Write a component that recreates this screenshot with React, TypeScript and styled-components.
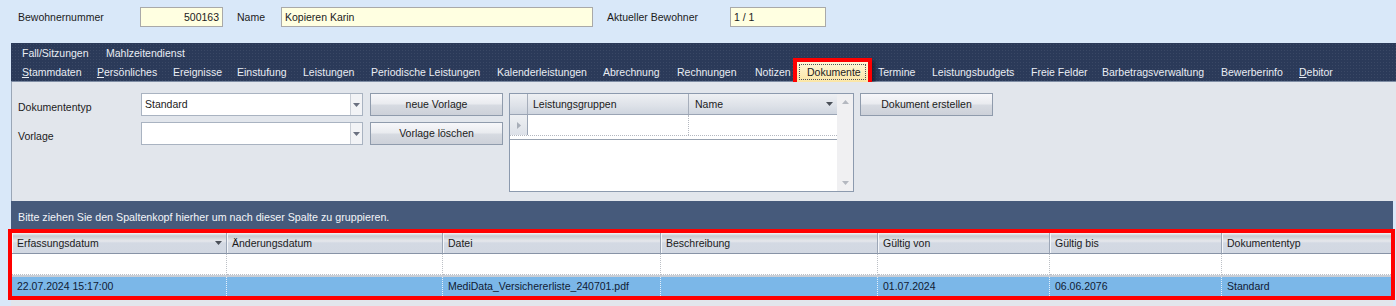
import styled, { createGlobalStyle } from "styled-components";

const GlobalStyle = createGlobalStyle`
  body {
    margin: 0;
    background: #d9e8f9;
    font-family: "Liberation Sans", Arial, sans-serif;
    font-size: 10.5px;
    color: #1b1b1b;
  }
`;

type Tab = { label: string; w: number; u?: boolean; active?: boolean };

const tabsTop: Tab[] = [
  { label: "Fall/Sitzungen", w: 84 },
  { label: "Mahlzeitendienst", w: 110 },
];

const tabsMain: Tab[] = [
  { label: "Stammdaten", w: 75, u: true },
  { label: "Persönliches", w: 76, u: true },
  { label: "Ereignisse", w: 64 },
  { label: "Einstufung", w: 66 },
  { label: "Leistungen", w: 68 },
  { label: "Periodische Leistungen", w: 126 },
  { label: "Kalenderleistungen", w: 106 },
  { label: "Abrechnung", w: 74 },
  { label: "Rechnungen", w: 78 },
  { label: "Notizen", w: 52 },
  { label: "Dokumente", w: 71, active: true },
  { label: "Termine", w: 54 },
  { label: "Leistungsbudgets", w: 99 },
  { label: "Freie Felder", w: 71 },
  { label: "Barbetragsverwaltung", w: 119 },
  { label: "Bewerberinfo", w: 78 },
  { label: "Debitor", w: 60, u: true },
];

const columns = [
  { title: "Erfassungsdatum", sort: true, value: "22.07.2024 15:17:00" },
  { title: "Änderungsdatum", value: "" },
  { title: "Datei", value: "MediData_Versichererliste_240701.pdf" },
  { title: "Beschreibung", value: "" },
  { title: "Gültig von", value: "01.07.2024" },
  { title: "Gültig bis", value: "06.06.2076" },
  { title: "Dokumententyp", value: "Standard" },
];

const Caret = ({ dir, color = "#4a4f58" }: { dir: "down" | "up" | "right"; color?: string }) => {
  const pts =
    dir === "down" ? "0,0 7,0 3.5,4" : dir === "up" ? "0,4 7,4 3.5,0" : "0,0 4,3.5 0,7";
  const w = dir === "right" ? 4 : 7;
  const h = dir === "right" ? 7 : 4;
  return (
    <svg width={w} height={h} viewBox={`0 0 ${w} ${h}`}>
      <polygon points={pts} fill={color} />
    </svg>
  );
};

const renderLabel = (t: Tab) =>
  t.u ? (
    <>
      <u>{t.label[0]}</u>
      {t.label.slice(1)}
    </>
  ) : (
    t.label
  );

export default function App() {
  return (
    <Page>
      <GlobalStyle />
      <TopBar>
        <FieldLabel $w={122}>Bewohnernummer</FieldLabel>
        <FieldInput $w={83} $right>
          500163
        </FieldInput>
        <FieldLabel $w={44} $ml={14}>
          Name
        </FieldLabel>
        <FieldInput $w={312}>Kopieren Karin</FieldInput>
        <FieldLabel $w={123} $ml={14}>
          Aktueller Bewohner
        </FieldLabel>
        <FieldInput $w={96}>1 / 1</FieldInput>
      </TopBar>

      <Main>
        <TabStrip>
          <TabRow $h={18}>
            {tabsTop.map((t) => (
              <TabItem key={t.label} $w={t.w}>
                {renderLabel(t)}
              </TabItem>
            ))}
          </TabRow>
          <TabRow $h={19}>
            {tabsMain.map((t) =>
              t.active ? (
                <ActiveTab key={t.label} $w={t.w}>
                  <FocusBox>{t.label}</FocusBox>
                </ActiveTab>
              ) : (
                <TabItem key={t.label} $w={t.w}>
                  {renderLabel(t)}
                </TabItem>
              )
            )}
          </TabRow>
        </TabStrip>

        <Panel>
          <FormGrid>
            <FormLabel>Dokumententyp</FormLabel>
            <Combo>
              <ComboText>Standard</ComboText>
              <ComboButton>
                <Caret dir="down" color="#6a7080" />
              </ComboButton>
            </Combo>
            <Button>neue Vorlage</Button>
            <FormLabel>Vorlage</FormLabel>
            <Combo>
              <ComboText />
              <ComboButton>
                <Caret dir="down" color="#6a7080" />
              </ComboButton>
            </Combo>
            <Button>Vorlage löschen</Button>
          </FormGrid>

          <MiniGrid>
            <MiniTable>
              <MiniHeader>
                <MiniHeadCell />
                <MiniHeadCell>Leistungsgruppen</MiniHeadCell>
                <MiniHeadCell>
                  Name
                  <HeadArrow>
                    <Caret dir="down" />
                  </HeadArrow>
                </MiniHeadCell>
              </MiniHeader>
              <MiniRow>
                <Indicator>
                  <Caret dir="right" color="#a8aeb8" />
                </Indicator>
                <MiniCell />
                <MiniCell />
              </MiniRow>
              <MiniRule />
            </MiniTable>
            <ScrollBar>
              <ScrollArrow>
                <Caret dir="up" color="#b4b8c0" />
              </ScrollArrow>
              <ScrollArrow>
                <Caret dir="down" color="#b4b8c0" />
              </ScrollArrow>
            </ScrollBar>
          </MiniGrid>

          <Button>Dokument erstellen</Button>
        </Panel>

        <GridArea>
          <GroupPanel>
            Bitte ziehen Sie den Spaltenkopf hierher um nach dieser Spalte zu gruppieren.
          </GroupPanel>
          <Marked>
            <GridRow>
              {columns.map((c) => (
                <HeadCell key={c.title}>
                  {c.title}
                  {c.sort && (
                    <HeadArrow>
                      <Caret dir="down" />
                    </HeadArrow>
                  )}
                </HeadCell>
              ))}
            </GridRow>
            <GridRow>
              {columns.map((c) => (
                <FilterCell key={c.title} />
              ))}
            </GridRow>
            <RowGap />
            <GridRow>
              {columns.map((c) => (
                <SelectedCell key={c.title}>{c.value}</SelectedCell>
              ))}
            </GridRow>
          </Marked>
        </GridArea>
      </Main>
    </Page>
  );
}

const Page = styled.div`
  width: 1396px;
  height: 306px;
  overflow: hidden;
  display: flex;
  flex-direction: column;
`;

const TopBar = styled.div`
  height: 43px;
  box-sizing: border-box;
  padding: 7px 0 0 18px;
  display: flex;
  align-items: flex-start;
`;

const FieldLabel = styled.div<{ $w: number; $ml?: number }>`
  width: ${(p) => p.$w}px;
  margin-left: ${(p) => p.$ml ?? 0}px;
  line-height: 20px;
`;

const FieldInput = styled.div<{ $w: number; $right?: boolean }>`
  width: ${(p) => p.$w}px;
  height: 20px;
  box-sizing: border-box;
  border: 1px solid #a9a9a9;
  background: #ffffe1;
  padding: 0 3px;
  line-height: 18px;
  text-align: ${(p) => (p.$right ? "right" : "left")};
`;

const Main = styled.div`
  margin-left: 11px;
  flex: 1;
  display: flex;
  flex-direction: column;
`;

const TabStrip = styled.div`
  height: 38px;
  padding-left: 1px;
  background-color: #2b3a59;
  background-image: radial-gradient(rgba(255, 255, 255, 0.07) 0.6px, transparent 0.8px);
  background-size: 3px 3px;
  border-bottom: 1px solid #7e8ca3;
  display: flex;
  flex-direction: column;
`;

const TabRow = styled.div<{ $h: number }>`
  height: ${(p) => p.$h}px;
  display: flex;
  align-items: center;
  &:first-child {
    margin-top: 1px;
  }
`;

const TabItem = styled.div<{ $w: number }>`
  width: ${(p) => p.$w}px;
  flex: none;
  padding-left: 10px;
  box-sizing: border-box;
  color: #e9edf4;
  white-space: nowrap;
`;

const ActiveTab = styled.div<{ $w: number }>`
  width: ${(p) => p.$w}px;
  height: 20px;
  margin-top: 1px;
  flex: none;
  box-sizing: border-box;
  padding: 2px;
  background: linear-gradient(#fff7d6, #fbe6a6);
  outline: 4px solid #ff0000;
  box-shadow: 3px 3px 3px 4px rgba(0, 0, 0, 0.35);
  color: #1b1b1b;
`;

const FocusBox = styled.div`
  height: 100%;
  box-sizing: border-box;
  border: 1px dotted #50545c;
  padding-left: 7px;
  line-height: 14px;
`;

const Panel = styled.div`
  height: 119px;
  box-sizing: border-box;
  background: #e2e6ec;
  border-left: 1px solid #9aa6b6;
  padding: 11px 0 0 6px;
  display: flex;
  align-items: flex-start;
  gap: 6px;
`;

const FormGrid = styled.div`
  display: grid;
  grid-template-columns: 116px 222px 133px;
  grid-template-rows: 23px 23px;
  column-gap: 7px;
  row-gap: 6px;
  align-items: center;
`;

const FormLabel = styled.div`
  padding-top: 4px;
`;

const Combo = styled.div`
  height: 23px;
  box-sizing: border-box;
  border: 1px solid #a9b3c1;
  background: #ffffff;
  display: flex;
`;

const ComboText = styled.div`
  flex: 1;
  padding-left: 3px;
  line-height: 21px;
`;

const ComboButton = styled.div`
  width: 11px;
  border-left: 1px solid #c9ced6;
  background: #f2f3f6;
  display: flex;
  align-items: center;
  justify-content: center;
`;

const Button = styled.div`
  width: 133px;
  height: 23px;
  flex: none;
  box-sizing: border-box;
  border: 1px solid #8f9bac;
  background: linear-gradient(#f7f7fa, #eaecf0 45%, #d6dae1 55%, #cdd1d9);
  text-align: center;
  line-height: 20px;
`;

const MiniGrid = styled.div`
  width: 345px;
  height: 99px;
  box-sizing: border-box;
  border: 1px solid #8c9aae;
  background: #ffffff;
  display: flex;
`;

const MiniTable = styled.div`
  flex: 1;
  display: flex;
  flex-direction: column;
`;

const MiniHeader = styled.div`
  height: 20px;
  display: grid;
  grid-template-columns: 18px 161px 1fr;
  background: linear-gradient(#eef0f3, #dde1e8 60%, #cfd5df);
  border-bottom: 1px solid #9aa4b4;
`;

const MiniHeadCell = styled.div`
  position: relative;
  border-right: 1px solid #a6aebb;
  padding-left: 5px;
  line-height: 20px;
  &:last-child {
    border-right: none;
    padding-left: 6px;
  }
`;

const HeadArrow = styled.span`
  position: absolute;
  right: 4px;
  top: 0;
  bottom: 0;
  display: flex;
  align-items: center;
`;

const MiniRow = styled.div`
  height: 20px;
  display: grid;
  grid-template-columns: 18px 161px 1fr;
  border-bottom: 1px dotted #b4b8c0;
`;

const Indicator = styled.div`
  background: linear-gradient(#eef0f3, #dde1e8);
  border-right: 1px solid #9aa4b4;
  display: flex;
  align-items: center;
  justify-content: center;
`;

const MiniCell = styled.div`
  border-right: 1px dotted #b4b8c0;
  &:last-child {
    border-right: none;
  }
`;

const MiniRule = styled.div`
  margin-top: 3px;
  height: 1px;
  background: #98a2b0;
`;

const ScrollBar = styled.div`
  width: 16px;
  background: #f0f0f2;
  display: flex;
  flex-direction: column;
  justify-content: space-between;
`;

const ScrollArrow = styled.div`
  height: 16px;
  display: flex;
  align-items: center;
  justify-content: center;
`;

const GridArea = styled.div`
  flex: 1;
  margin-right: 3px;
  background: #e2e6ec;
`;

const GroupPanel = styled.div`
  height: 32px;
  background: #465a7b;
  color: #f2f4f8;
  padding-left: 7px;
  line-height: 32px;
  font-size: 10.7px;
`;

const Marked = styled.div`
  margin: 0 2px 0 1px;
  outline: 4px solid #ff0000;
`;

const GridRow = styled.div`
  display: grid;
  grid-template-columns: 215px 216px 218px 217px 172px 172px 1fr;
`;

const HeadCell = styled.div`
  position: relative;
  height: 21px;
  box-sizing: border-box;
  padding-left: 5px;
  line-height: 21px;
  background: linear-gradient(#f4f5f7, #c5c9d1 3px, #e6e8ec 8px, #d3d9e3 10px, #d2d8e2);
  border-right: 1px solid #9ca6b6;
  border-bottom: 1px solid #8793a6;
  box-shadow: inset 1px 0 #f4f6f9;
  &:last-child {
    border-right: none;
  }
`;

const FilterCell = styled.div`
  height: 21px;
  box-sizing: border-box;
  background: #ffffff;
  border-right: 1px dotted #bcc0c6;
  border-bottom: 1px dotted #bcc0c6;
  &:last-child {
    border-right: none;
  }
`;

const RowGap = styled.div`
  height: 2px;
  background: #c9ced6;
`;

const SelectedCell = styled.div`
  height: 19px;
  box-sizing: border-box;
  padding-left: 5px;
  line-height: 19px;
  background: #7bb7e8;
  color: #111a33;
  border-right: 1px dotted #e6f0fa;
  white-space: nowrap;
  &:last-child {
    border-right: none;
  }
`;
